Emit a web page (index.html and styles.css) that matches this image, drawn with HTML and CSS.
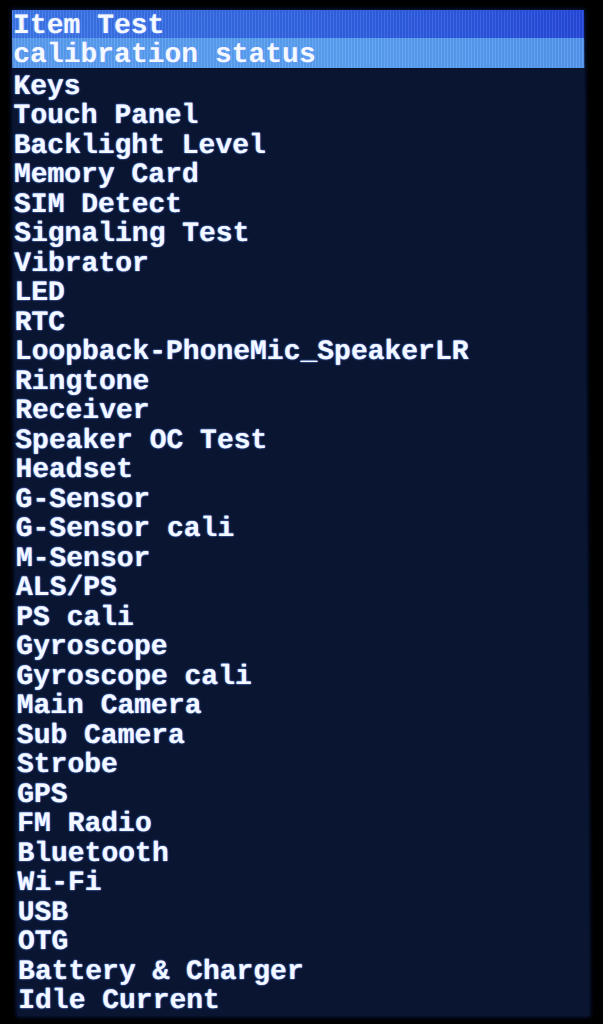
FILE: index.html
```html
<!DOCTYPE html>
<html>
<head>
<meta charset="utf-8">
<title>Item Test</title>
<link rel="stylesheet" href="styles.css">
</head>
<body>
<div class="screen">
  <div class="title">Item Test</div>
  <div class="sel">calibration status</div>
  <ul class="list">
    <li>Keys</li>
    <li>Touch Panel</li>
    <li>Backlight Level</li>
    <li>Memory Card</li>
    <li>SIM Detect</li>
    <li>Signaling Test</li>
    <li>Vibrator</li>
    <li>LED</li>
    <li>RTC</li>
    <li>Loopback-PhoneMic_SpeakerLR</li>
    <li>Ringtone</li>
    <li>Receiver</li>
    <li>Speaker OC Test</li>
    <li>Headset</li>
    <li>G-Sensor</li>
    <li>G-Sensor cali</li>
    <li>M-Sensor</li>
    <li>ALS/PS</li>
    <li>PS cali</li>
    <li>Gyroscope</li>
    <li>Gyroscope cali</li>
    <li>Main Camera</li>
    <li>Sub Camera</li>
    <li>Strobe</li>
    <li>GPS</li>
    <li>FM Radio</li>
    <li>Bluetooth</li>
    <li>Wi-Fi</li>
    <li>USB</li>
    <li>OTG</li>
    <li>Battery &amp; Charger</li>
    <li>Idle Current</li>
  </ul>
</div>
</body>
</html>
```
FILE: styles.css
```css
html, body {
  margin: 0;
  background: #000;
  height: 100%;
  overflow: hidden;
}
body {
  padding: 10px 0 0 12px;
  box-sizing: border-box;
}
.screen {
  width: 572px;
  background: #0a1532;
  font-family: "Liberation Mono", "Courier New", monospace;
  font-weight: bold;
  font-size: 28px;
  color: #f4f8ff;
  text-shadow: 0 0 2px #5b8cff, 0 0 1px #a9c4ff;
  transform: skewX(0.3deg);
  transform-origin: 0 0;
  box-shadow: 0 0 4px 1px #0a1a45;
}
.title {
  line-height: 28px;
  padding: 2px 0 0 1px;
  height: 26px;
  white-space: nowrap;
  background:
    repeating-linear-gradient(90deg, rgba(255,255,255,0.08) 0 1px, rgba(0,0,0,0.06) 1px 3px),
    linear-gradient(90deg, #3d78ea 0%, #3468e6 45%, #2c58e2 80%, #2549de 100%);
}
.sel {
  line-height: 26px;
  padding: 4px 0 0 1px;
  white-space: nowrap;
  background:
    repeating-linear-gradient(90deg, rgba(255,255,255,0.07) 0 1px, rgba(0,0,0,0.05) 1px 3px),
    linear-gradient(90deg, #5a9ef2 0%, #5aa2f4 60%, #5498f0 100%);
}
.list {
  list-style: none;
  margin: 0;
  padding: 3.5px 0 0 1px;
}
.list li {
  line-height: 29.5px;
  white-space: nowrap;
}
```
